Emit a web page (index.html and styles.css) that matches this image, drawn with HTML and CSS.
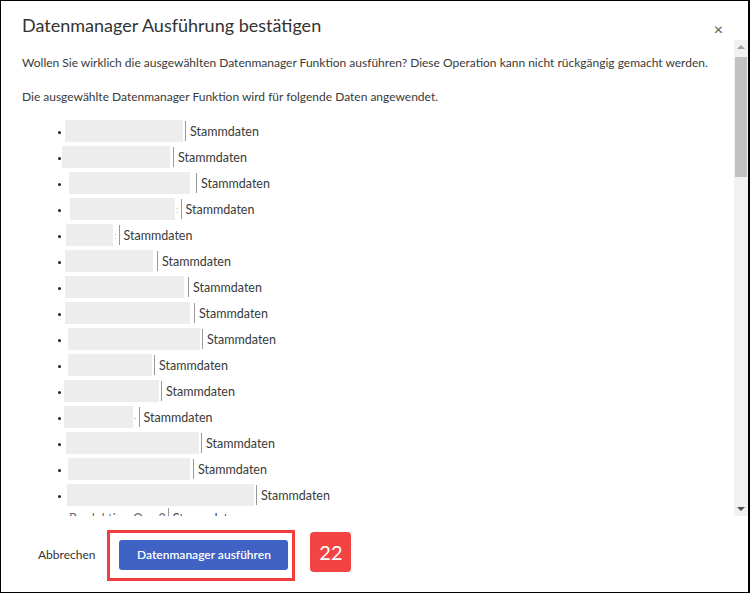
FILE: index.html
```html
<!DOCTYPE html>
<html lang="de">
<head>
    <meta charset="UTF-8">
    <title>Datenmanager Ausführung bestätigen</title>
    <link rel="stylesheet" href="styles.css">
</head>
<body>
    <div class="dialog">
        <div class="head">
            <h1 class="title">Datenmanager Ausführung bestätigen</h1>
            <span class="close">&times;</span>
        </div>

        <div class="scroll">
            <div class="content">
                <p class="msg">Wollen Sie wirklich die ausgewählten Datenmanager Funktion ausführen? Diese Operation kann nicht rückgängig gemacht werden.</p>
                <p class="msg second">Die ausgewählte Datenmanager Funktion wird für folgende Daten angewendet.</p>
                <ul class="items">
                    <li><span class="dot"></span><span class="blur" style="margin-left:4px;width:118px"></span><span class="sep"></span>Stammdaten</li>
                    <li><span class="dot"></span><span class="blur" style="margin-left:1px;width:108px"></span><span class="sep" style="margin-left:3px"></span>Stammdaten</li>
                    <li><span class="dot"></span><span class="blur" style="margin-left:8px;width:121px"></span><span class="sep" style="margin-left:6px"></span>Stammdaten</li>
                    <li><span class="dot"></span><span class="blur" style="margin-left:9px;width:105px"></span><span class="tail">:</span><span class="sep"></span>Stammdaten</li>
                    <li><span class="dot"></span><span class="blur" style="margin-left:5px;width:47px"></span><span class="tail">:</span><span class="sep"></span>Stammdaten</li>
                    <li><span class="dot"></span><span class="blur" style="margin-left:4px;width:88px"></span><span class="sep" style="margin-left:4px"></span>Stammdaten</li>
                    <li><span class="dot"></span><span class="blur" style="margin-left:4px;width:119px"></span><span class="sep" style="margin-left:4px"></span>Stammdaten</li>
                    <li><span class="dot"></span><span class="blur" style="margin-left:4px;width:125px"></span><span class="sep" style="margin-left:4px"></span>Stammdaten</li>
                    <li><span class="dot"></span><span class="blur" style="margin-left:7px;width:132px"></span><span class="sep"></span>Stammdaten</li>
                    <li><span class="dot"></span><span class="blur" style="margin-left:7px;width:84px"></span><span class="sep"></span>Stammdaten</li>
                    <li><span class="dot"></span><span class="blur" style="margin-left:3px;width:95px"></span><span class="sep"></span>Stammdaten</li>
                    <li><span class="dot"></span><span class="blur" style="margin-left:3px;width:69px"></span><span class="tail">&middot;</span><span class="sep"></span>Stammdaten</li>
                    <li><span class="dot"></span><span class="blur" style="margin-left:5px;width:133px"></span><span class="sep"></span>Stammdaten</li>
                    <li><span class="dot"></span><span class="blur" style="margin-left:7px;width:122px"></span><span class="sep" style="margin-left:3px"></span>Stammdaten</li>
                    <li><span class="dot"></span><span class="blur" style="margin-left:6px;width:187px"></span><span class="sep"></span>Stammdaten</li>
                    <li class="short"><span class="dot"></span><span class="plain">Produktion Org-2</span><span class="sep"></span>Stammdaten</li>
                </ul>
            </div>
            <div class="bar">
                <span class="arrow up"></span>
                <span class="thumb"></span>
                <span class="rest"></span>
                <span class="arrow down"></span>
            </div>
        </div>

        <div class="foot">
            <a class="cancel">Abbrechen</a>
            <div class="mark">
                <button class="run">Datenmanager ausführen</button>
            </div>
            <span class="badge">22</span>
        </div>
    </div>
</body>
</html>
```

FILE: styles.css
```css
body {
    margin: 0;
    font-family: Lato, "Open Sans", sans-serif;
    color: #3a3a3a;
}
.dialog {
    width: 750px;
    height: 593px;
    box-sizing: border-box;
    border: 1px solid #000;
    border-right-width: 2px;
    display: flex;
    flex-direction: column;
    background: #fff;
}
.head {
    height: 39px;
    display: flex;
    align-items: center;
    justify-content: space-between;
    padding: 0 25px 0 21px;
}
.title {
    margin: 0;
    font-size: 18px;
    font-weight: 400;
    color: #333;
    padding-top: 8px;
}
.close {
    font-size: 16px;
    color: #555;
    padding-top: 16px;
}
.scroll {
    height: 476px;
    display: flex;
    overflow: hidden;
}
.content {
    flex: 1;
    padding: 14px 0 0 21px;
    overflow: hidden;
}
.msg {
    margin: 0;
    font-size: 12px;
    line-height: 18px;
}
.second {
    margin-top: 16px;
}
.items {
    list-style: none;
    margin: 12px 0 0;
    padding: 0 0 0 36px;
}
.items li {
    height: 26px;
    display: flex;
    align-items: center;
    font-size: 12.5px;
}
.items li.short {
    height: 20px;
}
.dot {
    width: 3px;
    height: 3px;
    background: #222;
    border-radius: 50%;
    margin-top: 2px;
}
.blur {
    height: 22px;
    background: #ededed;
}
.tail {
    color: #bbb;
    font-size: 10px;
    margin-left: 1px;
}
.plain {
    margin-left: 8px;
    color: #666;
}
.sep {
    width: 1px;
    height: 20px;
    background: #999;
    margin: 0 4px 0 2px;
}
.bar {
    width: 14px;
    background: #f1f1f1;
    display: flex;
    flex-direction: column;
    align-items: center;
}
.arrow {
    width: 0;
    height: 0;
    border-left: 4px solid transparent;
    border-right: 4px solid transparent;
}
.up {
    border-bottom: 4px solid #a3a3a3;
    margin: 5px 0 8px;
}
.down {
    border-top: 4px solid #505050;
    margin: 6px 0 5px;
}
.thumb {
    width: 12px;
    height: 120px;
    background: #c1c1c1;
}
.rest {
    flex: 1;
}
.foot {
    flex: 1;
    display: flex;
    align-items: center;
    padding-left: 37px;
}
.cancel {
    font-size: 12px;
    color: #333;
    margin-right: 12px;
}
.mark {
    border: 3px solid #f23d3d;
    padding: 7px 4px 8px 9px;
    margin-top: 2px;
}
.run {
    display: block;
    width: 169px;
    height: 30px;
    border: 0;
    border-radius: 3px;
    background: #3f62c4;
    color: #fff;
    font-family: inherit;
    font-size: 12px;
    font-weight: 600;
}
.badge {
    width: 41px;
    height: 40px;
    margin-left: 15px;
    margin-bottom: 4px;
    border-radius: 4px;
    background: #f34343;
    color: #fff;
    font-size: 20px;
    display: flex;
    align-items: center;
    justify-content: center;
}
```
